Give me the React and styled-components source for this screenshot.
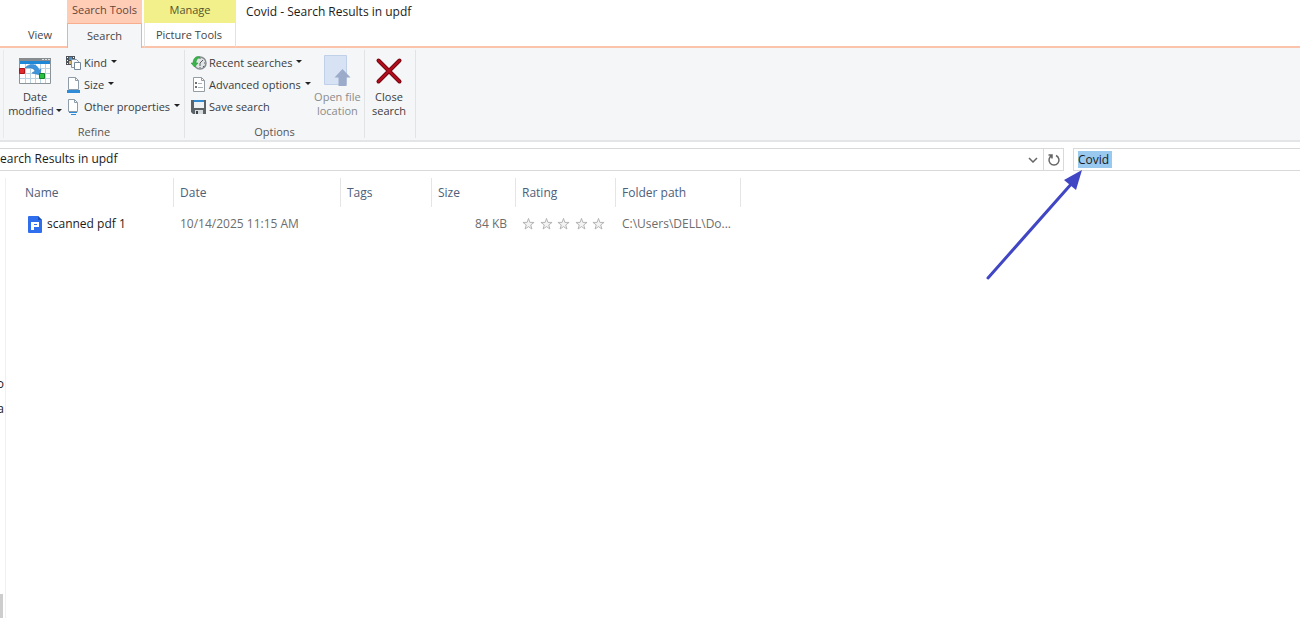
import React, { useEffect, useRef } from "react";
import styled, { createGlobalStyle } from "styled-components";

const GlobalStyle = createGlobalStyle`
  * {
    box-sizing: border-box;
  }
  html,
  body,
  #root {
    height: 100%;
    margin: 0;
  }
  body {
    overflow: hidden;
    background: #fff;
    color: #1b1b1b;
    font-family: "Open Sans", "Noto Sans", sans-serif;
    font-size: 12px;
    line-height: 16px;
  }
  button,
  input {
    font: inherit;
    color: inherit;
  }
`;

const Window = styled.div`
  display: flex;
  flex-direction: column;
  min-height: 100%;
`;

/* Title bar and tabs */
const TitleBar = styled.header`
  display: flex;
  height: 48px;
`;

const TabGroup = styled.div`
  display: flex;
  flex-direction: column;
  justify-content: flex-end;
  width: ${(props) => props.$width}px;
`;

const ContextLabel = styled.span`
  flex: none;
  height: 23px;
  padding-top: 2px;
  font-size: 11px;
  text-align: center;
  white-space: nowrap;
  color: ${(props) => props.$ink};
  background: ${(props) => props.$fill};
`;

const Tab = styled.button`
  height: 25px;
  padding: 0;
  border: 0;
  border-bottom: 2px solid #fbc4aa;
  background: #fff;
  color: #444;
  font-size: 11px;
`;

const ViewTab = styled(Tab)`
  padding-left: 13px;
`;

const ActiveTab = styled(Tab)`
  padding-bottom: 1px;
  border: 1px solid #f8ae8c;
  border-bottom: 0;
  background: #f5f6f7;
`;

const PictureTab = styled(Tab)`
  padding-right: 2px;
  border-left: 1px solid #e2e2e2;
  border-right: 1px solid #e2e2e2;
`;

const TabGap = styled.div`
  width: 2px;
  border-bottom: 2px solid #fbc4aa;
`;

const Title = styled.h1`
  flex: 1;
  margin: 0;
  padding: 4px 10px;
  border-bottom: 2px solid #fbc4aa;
  font-size: 12px;
  font-weight: 400;
`;

/* Ribbon */
const Ribbon = styled.div`
  display: flex;
  height: 94px;
  padding-left: 3px;
  border-bottom: 2px solid #e4e5e6;
  background: #f5f6f7;
`;

const Group = styled.section`
  display: flex;
  flex-direction: column;
  justify-content: space-between;
  width: ${(props) => props.$width}px;
  margin: 2px 0;
  padding-top: 2px;
  border-right: 1px solid #e1e3e5;
  &:first-child {
    border-left: 1px solid #e8eaec;
  }
`;

const GroupBody = styled.div`
  display: flex;
`;

const GroupName = styled.span`
  color: #555;
  font-size: 11px;
  line-height: 12px;
  text-align: center;
`;

const Commands = styled.div`
  display: flex;
  flex-direction: column;
  flex: 1;
  padding-left: ${(props) => (props.$inset ? "6px" : "0")};
`;

const Command = styled.button`
  display: flex;
  align-items: center;
  gap: 2px;
  height: 22px;
  padding: 0;
  border: 0;
  background: none;
  color: #3c3c3c;
  font-size: 11px;
  white-space: nowrap;
  > svg:first-child {
    flex: none;
  }
`;

const BigCommand = styled.button`
  display: flex;
  flex-direction: column;
  align-items: center;
  gap: 3px;
  width: ${(props) => props.$width}px;
  padding: 3px 0 0;
  border: 0;
  background: none;
  color: #3c3c3c;
  font-size: 11px;
  line-height: 14px;
  white-space: nowrap;
  > svg {
    height: 32px;
  }
  &:disabled {
    color: #8b8b8b;
  }
`;

const Caret = styled.i`
  display: inline-block;
  margin: 0 0 3px 2px;
  border: 3px solid transparent;
  border-top-color: #222;
  border-bottom: 0;
`;

/* Address row */
const AddressRow = styled.div`
  display: flex;
  gap: 9px;
  padding-top: 6px;
`;

const AddressBar = styled.div`
  display: flex;
  flex: 1;
  height: 23px;
  border: 1px solid #d9d9d9;
  border-left: 0;
`;

const Crumb = styled.span`
  flex: 1;
  padding-top: 2px;
`;

const BarButton = styled.button`
  display: grid;
  place-items: center;
  width: 20px;
  padding: 0;
  border: 0;
  border-left: ${(props) => (props.$divided ? "1px solid #d9d9d9" : "0")};
  background: none;
`;

const SearchBox = styled.div`
  position: relative;
  width: 227px;
`;

const SearchInput = styled.input`
  display: block;
  width: 100%;
  height: 23px;
  padding: 0 4px;
  border: 1px solid #d9d9d9;
  border-right: 0;
  border-radius: 0;
  outline: 0;
  &::selection {
    background: #99c9ef;
    color: #1b1b1b;
  }
`;

const Pointer = styled.svg`
  position: absolute;
  top: 20px;
  left: -90px;
  pointer-events: none;
`;

/* File list */
const Main = styled.main`
  display: flex;
  flex: 1;
  padding-top: 7px;
`;

const SidePane = styled.aside`
  display: flex;
  flex-direction: column;
  align-items: flex-end;
  width: 6px;
  padding: 193px 1px 0 0;
  overflow: hidden;
  border-right: 1px solid #f0f0f0;
  line-height: 25px;
`;

const ScrollThumb = styled.div`
  width: 3px;
  height: 24px;
  margin: auto 1px 0 0;
  background: #cdcdcd;
`;

const FileTable = styled.table`
  align-self: flex-start;
  width: 735px;
  table-layout: fixed;
  border-collapse: separate;
  border-spacing: 0;
  th,
  td {
    padding: 0 6px;
    text-align: left;
    font-weight: 400;
    white-space: nowrap;
  }
  th {
    height: 29px;
    border-right: 1px solid #e5e5e5;
    color: #4c607a;
  }
  td {
    height: 34px;
    color: #6d6d6d;
  }
  th:first-child {
    padding-left: 19px;
  }
  td:first-child {
    padding-left: 22px;
  }
`;

const FileName = styled.span`
  display: flex;
  align-items: center;
  gap: 5px;
  color: #1b1b1b;
`;

const SizeCell = styled.td`
  && {
    padding-right: 9px;
    text-align: right;
  }
`;

const Stars = styled.span`
  display: flex;
  justify-content: space-between;
  width: 83px;
`;

const CalendarIcon = () => (
  <svg width="32" height="28" viewBox="0 0 32 28">
    <path d="M.5 1.5h31v25H.5z" fill="#fff" stroke="#8b9499" />
    <path d="M0 1h32v3H0z" fill="#868c90" />
    <path d="M23 2.500h2m1 0h2m1 0h2" stroke="#d9dde0" />
    <path d="M1 4h30v3H1z" fill="#1f87d6" />
    <path d="M6.500 7v19m5-19v19m5-19v19m5-19v19m5-19v19M1 11.500h30M1 16.500h30M1 21.500h30" stroke="#b9d3e3" />
    <path d="M6 11c4-5 12-5 14 2l2-1-1 6-8-2 3-2c-1-3-5-4-10-3z" fill="#3d94dc" stroke="#2475bb" strokeWidth=".5" />
    <path d="M.5 11.500h5v5h-5z" fill="#e2292c" stroke="#ad1518" />
    <path d="M20.500 16.500h5v5h-5z" fill="#28c240" stroke="#16822a" />
  </svg>
);

const KindIcon = () => (
  <svg width="16" height="16" viewBox="0 0 16 16">
    <path d="M0 1h9v9H0z" fill="#4d5358" />
    <path d="M1 2h1v1H1zm0 3h1v1H1zm0 3h1v1H1zM7 2h1v1H7z" fill="#fff" />
    <path d="M3 2h3v3H3z" fill="#4f8fc4" />
    <path d="M3 6h3v3H3z" fill="#d5b66c" />
    <path d="M5.500 4.500h5l2 2v6h-7z" fill="#f4f8fb" stroke="#8295a3" />
    <path d="M8.500 7.500h6v7h-6z" fill="#fff" stroke="#75889a" />
  </svg>
);

const SizeIcon = () => (
  <svg width="16" height="16" viewBox="0 0 16 16">
    <path d="M2.500.5h7l3 3v9h-10z" fill="#fff" stroke="#8e9da9" />
    <path d="M9.500.5v3h3" fill="none" stroke="#8e9da9" />
    <path d="M1 13h13v3H1z" fill="#2e8bd8" />
  </svg>
);

const PropertiesIcon = () => (
  <svg width="16" height="16" viewBox="0 0 16 16">
    <path d="M2.500.5h6l3 3v9h-9z" fill="#fff" stroke="#8e9da9" />
    <path d="M8.500.5v3h3" fill="none" stroke="#8e9da9" />
    <path d="M3 13.500h8M5 15.500h5" stroke="#2e8bd8" />
  </svg>
);

const RecentIcon = () => (
  <svg width="16" height="16" viewBox="0 0 16 16">
    <circle cx="9" cy="8" r="6" fill="#e0e4e5" stroke="#858c8f" strokeWidth="1.500" />
    <path d="M9 8l3-3M9 8v3M9 3v1M9 12v1M13 8h1M12 11l1 1" stroke="#555d60" />
    <path d="M0 8l3.500 4L7 8H5c0-3 1-4 4-6C5 0 2 4 2 8z" fill="#39b54a" stroke="#258c34" strokeWidth=".5" />
  </svg>
);

const AdvancedIcon = () => (
  <svg width="16" height="16" viewBox="0 0 16 16">
    <path d="M2.500.5h8l3 3v11h-11z" fill="#fff" stroke="#969da2" />
    <path d="M10.500.5v3h3" fill="none" stroke="#969da2" />
    <path d="M4 5h2v2H4zm0 4h2v2H4z" fill="#6a7379" />
    <path d="M7 6.500h4M7 10.500h5" stroke="#abb2b6" />
  </svg>
);

const SaveIcon = () => (
  <svg width="16" height="16" viewBox="0 0 16 16">
    <path d="M0 1h15v14H2l-2-2z" fill="#5b6268" />
    <path d="M3 1h10v8H3z" fill="#eef2f5" />
    <path d="M3 1h10v2H3z" fill="#328bd0" />
    <path d="M4 11h8v4H4z" fill="#d8dcdf" />
    <path d="M5 12h2v3H5z" fill="#3f464b" />
  </svg>
);

const OpenLocationIcon = () => (
  <svg width="28" height="32" viewBox="0 0 28 32">
    <path d="M1.500.5h22v29h-22z" fill="#d7e3f4" stroke="#c0d0e8" />
    <path d="M19.500 14l8 8.500h-4V31h-8v-8.500h-4z" fill="#9babc9" />
  </svg>
);

const CloseIcon = () => (
  <svg width="28" height="28" viewBox="0 0 28 28">
    <path d="M3.500 3.500l21 21m0-21l-21 21" stroke="#760611" strokeWidth="4" strokeLinecap="round" />
    <path d="M3.500 3.500l21 21m0-21l-21 21" stroke="#b50d1c" strokeWidth="2" strokeLinecap="round" />
  </svg>
);

const FileIcon = () => (
  <svg width="14" height="17" viewBox="0 0 14 17">
    <path d="M1 0h9l4 4v12q0 1-1 1H1q-1 0-1-1V1q0-1 1-1z" fill="#2f6fed" />
    <path d="M10 0l4 4h-4z" fill="#1c50bd" />
    <path d="M3 6h8v5H6v3H3z" fill="#fff" />
    <path d="M6 8h3v1H6z" fill="#2f6fed" />
  </svg>
);

const Star = () => (
  <svg width="13" height="14" viewBox="0 0 14 14">
    <path
      d="M7 1l1.500 4.300H13L9.400 8l1.300 4.400L7 9.800l-3.700 2.600L4.600 8 1 5.300h4.500z"
      fill="#f4f4f4"
      stroke="#b0b0b0"
    />
  </svg>
);

const App = () => {
  const searchRef = useRef(null);

  useEffect(() => {
    searchRef.current.focus();
    searchRef.current.select();
  }, []);

  return (
    <Window>
      <GlobalStyle />
      <TitleBar>
        <TabGroup $width={67}>
          <ViewTab>View</ViewTab>
        </TabGroup>
        <TabGroup $width={75}>
          <ContextLabel $fill="#ffcdb6" $ink="#5f463c">Search Tools</ContextLabel>
          <ActiveTab>Search</ActiveTab>
        </TabGroup>
        <TabGap />
        <TabGroup $width={92}>
          <ContextLabel $fill="#f1f08a" $ink="#55552d">Manage</ContextLabel>
          <PictureTab>Picture Tools</PictureTab>
        </TabGroup>
        <Title>Covid - Search Results in updf</Title>
      </TitleBar>

      <Ribbon>
        <Group $width={182}>
          <GroupBody>
            <BigCommand $width={62}>
              <CalendarIcon />
              <span>
                Date
                <br />
                modified
                <Caret />
              </span>
            </BigCommand>
            <Commands>
              <Command><KindIcon />Kind<Caret /></Command>
              <Command><SizeIcon />Size<Caret /></Command>
              <Command><PropertiesIcon />Other properties<Caret /></Command>
            </Commands>
          </GroupBody>
          <GroupName>Refine</GroupName>
        </Group>
        <Group $width={180}>
          <GroupBody>
            <Commands $inset>
              <Command><RecentIcon />Recent searches<Caret /></Command>
              <Command><AdvancedIcon />Advanced options<Caret /></Command>
              <Command><SaveIcon />Save search</Command>
            </Commands>
            <BigCommand $width={60} disabled>
              <OpenLocationIcon />
              <span>
                Open file
                <br />
                location
              </span>
            </BigCommand>
          </GroupBody>
          <GroupName>Options</GroupName>
        </Group>
        <Group $width={51}>
          <BigCommand $width={48}>
            <CloseIcon />
            <span>
              Close
              <br />
              search
            </span>
          </BigCommand>
        </Group>
      </Ribbon>

      <AddressRow>
        <AddressBar>
          <Crumb>earch Results in updf</Crumb>
          <BarButton aria-label="Previous locations">
            <svg width="10" height="6" viewBox="0 0 10 6">
              <path d="M1 1l4 4 4-4" fill="none" stroke="#666" strokeWidth="1.500" />
            </svg>
          </BarButton>
          <BarButton $divided aria-label="Refresh">
            <svg width="14" height="14" viewBox="0 0 14 14">
              <path d="M9 2.500a5 5 0 1 1-4 0M1.500 2H5v3.500" fill="none" stroke="#666" strokeWidth="1.500" />
            </svg>
          </BarButton>
        </AddressBar>
        <SearchBox>
          <SearchInput ref={searchRef} aria-label="Search" defaultValue="Covid " />
          <Pointer width="104" height="116" viewBox="0 0 104 116">
            <path d="M5 110L90 14" stroke="#4046c4" strokeWidth="3" strokeLinecap="round" />
            <path d="M99 2L81 12l12 10z" fill="#4046c4" />
          </Pointer>
        </SearchBox>
      </AddressRow>

      <Main>
        <SidePane>
          <span>o</span>
          <span>a</span>
          <ScrollThumb />
        </SidePane>
        <FileTable>
          <colgroup>
            <col width="168" />
            <col width="167" />
            <col width="91" />
            <col width="84" />
            <col width="100" />
            <col width="125" />
          </colgroup>
          <thead>
            <tr>
              <th>Name</th>
              <th>Date</th>
              <th>Tags</th>
              <th>Size</th>
              <th>Rating</th>
              <th>Folder path</th>
            </tr>
          </thead>
          <tbody>
            <tr>
              <td>
                <FileName>
                  <FileIcon />
                  scanned pdf 1
                </FileName>
              </td>
              <td>10/14/2025 11:15 AM</td>
              <td />
              <SizeCell>84 KB</SizeCell>
              <td>
                <Stars>
                  {[1, 2, 3, 4, 5].map((n) => (
                    <Star key={n} />
                  ))}
                </Stars>
              </td>
              <td>C:\Users\DELL\Do...</td>
            </tr>
          </tbody>
        </FileTable>
      </Main>
    </Window>
  );
};

export default App;
